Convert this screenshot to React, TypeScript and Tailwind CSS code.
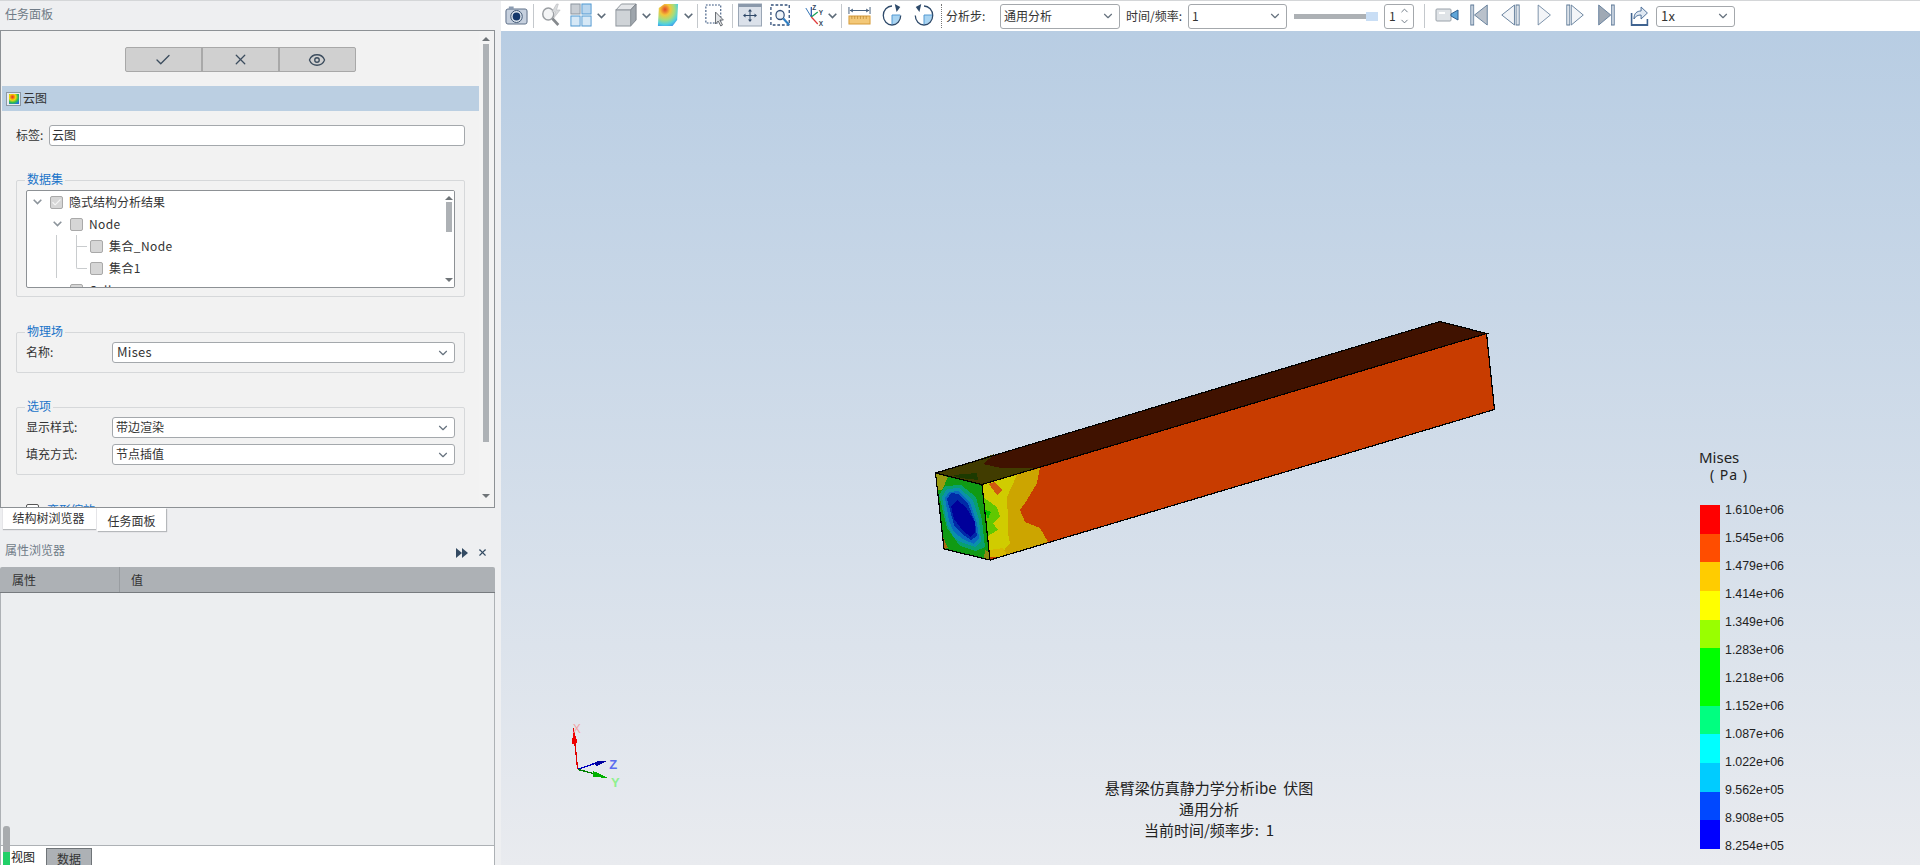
import type { ReactNode } from 'react';
import { Check, ChevronDown, ChevronUp, Eye, X } from 'lucide-react';

const legendBlocks = [
  'h-[29px] bg-[#ff0000]',
  'h-[28px] bg-[#ff4d00]',
  'h-[29px] bg-[#ffcc00]',
  'h-[29px] bg-[#ffff00]',
  'h-[28px] bg-[#99ff00]',
  'h-[58px] bg-[#00ff00]',
  'h-[28px] bg-[#00ff80]',
  'h-[29px] bg-[#00ffff]',
  'h-[29px] bg-[#00ccff]',
  'h-[28px] bg-[#0048ff]',
  'h-[29px] bg-[#0000ff]',
];

const legendLabels = [
  '1.610e+06', '1.545e+06', '1.479e+06', '1.414e+06', '1.349e+06', '1.283e+06', '1.218e+06',
  '1.152e+06', '1.087e+06', '1.022e+06', '9.562e+05', '8.908e+05', '8.254e+05',
];

function Sep({ className }: { className: string }) {
  return <div className={`h-[24px] w-px shrink-0 bg-[#c4c8cc] ${className}`} />;
}

function Chev({ className }: { className: string }) {
  return (
    <svg viewBox="0 0 9 6" className={`h-[6px] w-[9px] shrink-0 text-[#5d6b78] ${className}`} fill="none" stroke="currentColor" strokeWidth="1.6">
      <path d="M.7.8l3.8 3.8L8.3.8" />
    </svg>
  );
}

function Combo({ value, className, latin }: { value: string; className: string; latin?: boolean }) {
  return (
    <div className={`flex shrink-0 items-center justify-between rounded-[3px] border border-[#a4a8ac] bg-white pl-[3px] pr-[4px] text-[#333] ${className}`}>
      <span className={`pb-px ${latin ? 'pl-px text-[13px] tracking-[0.3px]' : ''}`}>{value}</span>
      <ChevronDown className="h-[14px] w-[14px] text-[#66727e]" strokeWidth={2} />
    </div>
  );
}

function Ico({ w, className, children }: { w: string; className?: string; children: ReactNode }) {
  return (
    <svg viewBox="0 0 24 24" className={`mb-[2px] h-[24px] shrink-0 ${w} ${className ?? ''}`} fill="none" preserveAspectRatio="none">
      {children}
    </svg>
  );
}

function Group({ title, className, children }: { title: string; className: string; children: ReactNode }) {
  return (
    <div className={`relative ml-[15px] mr-[14px] rounded-[2px] border border-[#d6d8da] px-[9px] ${className}`}>
      <span className="absolute left-[8px] top-[-11px] bg-[#f2f2f2] px-[2px] text-[12px] leading-[18px] text-[#1a74c9]">{title}</span>
      {children}
    </div>
  );
}

function Cb({ checked }: { checked?: boolean }) {
  return (
    <span className="flex h-[13px] w-[13px] shrink-0 items-center justify-center rounded-[2px] border border-[#a9a9a9] bg-[#d6d6d6]">
      {checked && <Check className="h-[11px] w-[11px] text-[#f4f4f4]" strokeWidth={2.4} />}
    </span>
  );
}

function TreeRow({ pad, chevron, label, checked, latin }: { pad: string; chevron?: boolean; label: string; checked?: boolean; latin?: boolean }) {
  return (
    <div className={`flex h-[22px] items-center ${pad}`}>
      {chevron && <Chev className="mr-[8px] text-[#8c949b]" />}
      <Cb checked={checked} />
      <span className={`ml-[6px] whitespace-nowrap ${latin ? 'tracking-[0.4px]' : ''}`}>{label}</span>
    </div>
  );
}

function Beam() {
  return (
    <svg viewBox="920 310 590 260" className="absolute left-[419px] top-[279px] h-[260px] w-[590px]" shapeRendering="crispEdges">
      {/* top face */}
      <polygon points="935.5,473 982,484.5 1486.5,333.5 1440,321.5" fill="#401200" />
      <polygon points="935.5,473 995,454 983,464 1003,468.5 1040,468 982,484.5" fill="#413c00" />
      <polygon points="953,475 977,473 978,480 960,478" fill="#1c3a00" />
      {/* side face */}
      <polygon points="982,484.5 1486.5,333.5 1494.5,409.5 990,560" fill="#c83c00" />
      <polygon points="982,484 1040,468 1037,483 1027,500 1020,510 1025,522 1040,528 1048,542 990,560" fill="#cca500" />
      <polygon points="982,484 1017,475 1007,497 1008,520 1008,533 1010,543 1000,555 990,560" fill="#d0cc00" />
      <polygon points="983,497 997,507 1000,517 993,523 998,530 986,537" fill="#60c800" />
      <polygon points="985,510 991,512 988,519" fill="#00c000" />
      <polygon points="988,484 995,482 1002,490 997,495 991,487" fill="#d05a10" />
      <polygon points="990,550 1003,548 1007,555 990,560" fill="#d8b800" />
      <polygon points="990,557 997,557 990,560" fill="#c83c00" />
      {/* front face */}
      <polygon points="935.5,473 982,484.5 990,560 944,549" fill="#109a14" />
      <polygon points="935.5,473 948,477 942,490 938,490" fill="#9a9a10" />
      <polygon points="942,535 948,548 944,549" fill="#a86a10" />
      <polygon points="985,550 990,552 990,560 984,558" fill="#8a8a10" />
      <polygon points="939,495 945,486 961,485 976,497 982,520 985,547 976,551 960,546 947,528" fill="#08a070" />
      <polygon points="942,497 947,489 959,488 973,500 979,520 981,541 976,547 963,543 954,538 947,524" fill="#0a90aa" />
      <polygon points="945,498 949,492 958,491 970,502 977,523 979,538 974,544 963,539 954,532 949,521" fill="#0a68c0" />
      <polygon points="947,499 951,493 958,494 968,504 975,522 977,536 971,540 962,534 954,525" fill="#002aa8" />
      <polygon points="951,506 957,500 966,507 975,522 975,532 971,537 963,531 954,519" fill="#00009a" />
      {/* edges */}
      <g stroke="#000" strokeWidth="1.2" fill="none">
        <polygon points="935.5,473 982,484.5 990,560 944,549" />
        <polyline points="935.5,473 1440,321.5 1486.5,333.5 982,484.5" />
        <polyline points="1486.5,333.5 1494.5,409.5 990,560" />
      </g>
    </svg>
  );
}

function Triad() {
  return (
    <svg viewBox="0 0 300 300" className="absolute left-[39px] top-[669px] h-[100px] w-[100px]" fontFamily="'Liberation Sans', sans-serif" fontSize="39" textAnchor="middle" shapeRendering="crispEdges">
      <polyline points="113,208 100,85" stroke="#e00000" strokeWidth="4" fill="none" />
      <polygon points="100,85 96,132 113,130" fill="#f00000" />
      <polyline points="113,208 165,190" stroke="#0000c0" strokeWidth="4" fill="none" />
      <polygon points="163,185 200,183 168,200" fill="#0000a0" />
      <polyline points="113,208 165,222" stroke="#008000" strokeWidth="4" fill="none" />
      <polygon points="160,213 203,233 160,232" fill="#00b000" />
      <text x="110" y="99" fill="#f2a3a3" fontSize="36">X</text>
      <text x="220" y="208" fill="#5a6cf0" fontWeight="700">Z</text>
      <text x="226" y="261" fill="#8ff08f" fontWeight="700">Y</text>
    </svg>
  );
}

export default function App() {
  return (
    <div className="flex h-[865px] w-[1920px] flex-col overflow-hidden bg-[#eeeff1] font-['Noto_Sans_CJK_SC','Noto_Sans',sans-serif] text-[12px] leading-[18px] text-[#333]">
      <div className="h-px shrink-0 bg-[#d4d6d8]" />
      <div className="flex min-h-0 flex-1">
        {/* Left column */}
        <div className="flex w-[501px] shrink-0 flex-col">
          <div className="flex h-[29px] shrink-0 items-center pl-[5px] pb-[3px] text-[#6f7b87]">任务面板</div>

          {/* Task panel */}
          <div className="flex h-[478px] w-[495px] shrink-0 border border-[#8d9195] bg-[#f2f2f2]">
            <div className="min-w-0 flex-1 overflow-hidden pt-[16px]">
              <div className="flex justify-center">
                <div className="flex h-[25px] w-[231px] rounded-[2px] border border-[#a8a8a8] bg-[#d0d0d0] text-[#3c4d5e]">
                  <div className="flex flex-1 items-center justify-center border-r-2 border-[#a8a8a8]"><Check className="h-[18px] w-[18px]" strokeWidth={1.8} /></div>
                  <div className="flex flex-1 items-center justify-center border-r-2 border-[#a8a8a8]"><X className="h-[17px] w-[17px]" strokeWidth={1.8} /></div>
                  <div className="flex flex-1 items-center justify-center"><Eye className="h-[18px] w-[18px]" strokeWidth={1.8} /></div>
                </div>
              </div>

              <div className="ml-px mt-[14px] flex h-[25px] items-center bg-[#bbcfe2] pl-[4px]">
                <div className="mr-[2px] flex h-[14px] w-[15px] items-center justify-center border border-[#8d98a4] bg-[#e8ecf0]">
                  <svg viewBox="0 0 10 10" className="h-[10px] w-[10px]">
                    <defs>
                      <radialGradient id="miniContour" cx="35%" cy="30%" r="80%">
                        <stop offset="0%" stopColor="#e8281c" />
                        <stop offset="40%" stopColor="#f5d80a" />
                        <stop offset="70%" stopColor="#2fc14a" />
                        <stop offset="100%" stopColor="#1f6fe0" />
                      </radialGradient>
                    </defs>
                    <rect width="10" height="10" fill="url(#miniContour)" />
                  </svg>
                </div>
                <span className="pb-px">云图</span>
              </div>

              <div className="ml-[15px] mr-[14px] mt-[14px] flex h-[21px] items-center">
                <span className="w-[33px] shrink-0 pb-px">标签:</span>
                <div className="flex h-[21px] flex-1 items-center rounded-[3px] border border-[#a4a8ac] bg-white pb-px pl-[2px]">云图</div>
              </div>

              <Group title="数据集" className="mt-[34px] h-[117px] pt-[9px]">
                <div className="relative flex h-[98px] overflow-hidden rounded-[2px] border border-[#8d9195] bg-white">
                  <div className="min-w-0 flex-1">
                    <TreeRow pad="pl-[6px]" chevron checked label="隐式结构分析结果" />
                    <TreeRow pad="pl-[26px]" chevron latin label="Node" />
                    <TreeRow pad="pl-[63px]" latin label="集合_Node" />
                    <TreeRow pad="pl-[63px]" latin label="集合1" />
                    <TreeRow pad="pl-[43px]" latin label="Cell" />
                  </div>
                  <div className="flex w-[10px] shrink-0 flex-col items-center bg-white">
                    <div className="mt-[5px] h-0 w-0 border-x-[4px] border-b-[4px] border-x-transparent border-b-[#6f7478]" />
                    <div className="mt-[2px] h-[30px] w-[6px] bg-[#adb1b5]" />
                    <div className="mt-[46px] h-0 w-0 border-x-[4px] border-t-[4px] border-x-transparent border-t-[#6f7478]" />
                  </div>
                  {/* tree guide lines */}
                  <div className="absolute left-[29px] top-[44px] h-[43px] w-px bg-[#c9ccce]" />
                  <div className="absolute left-[49px] top-[44px] h-[12px] w-[11px] border-b border-l border-[#c9ccce]" />
                  <div className="absolute left-[49px] top-[56px] h-[22px] w-[11px] rounded-bl-[2px] border-b border-l border-[#c9ccce]" />
                </div>
              </Group>

              <Group title="物理场" className="mt-[35px] h-[41px] pt-[9px]">
                <div className="flex items-center">
                  <span className="w-[86px] shrink-0 pb-px">名称:</span>
                  <Combo value="Mises" latin className="h-[21px] flex-1" />
                </div>
              </Group>

              <Group title="选项" className="mt-[34px] flex h-[68px] flex-col gap-[6px] pt-[9px]">
                <div className="flex items-center">
                  <span className="w-[86px] shrink-0 pb-px">显示样式:</span>
                  <Combo value="带边渲染" className="h-[21px] flex-1" />
                </div>
                <div className="flex items-center">
                  <span className="w-[86px] shrink-0 pb-px">填充方式:</span>
                  <Combo value="节点插值" className="h-[21px] flex-1" />
                </div>
              </Group>

              <div className="ml-[25px] mt-[26px] flex items-center">
                <span className="h-[13px] w-[13px] rounded-[2px] border border-[#555] bg-white" />
                <span className="ml-[8px] text-[#1a74c9]">变形缩放</span>
              </div>
            </div>

            {/* Panel scrollbar */}
            <div className="flex w-[15px] shrink-0 flex-col items-center bg-[#f3f3f3] pr-[1px]">
              <div className="mt-[6px] h-0 w-0 border-x-[4px] border-b-[4px] border-x-transparent border-b-[#6f7478]" />
              <div className="mt-[3px] h-[398px] w-[6px] bg-[#adb1b5]" />
              <div className="mt-[52px] h-0 w-0 border-x-[4px] border-t-[4px] border-x-transparent border-t-[#6f7478]" />
            </div>
          </div>

          {/* Tabs */}
          <div className="flex h-[25px] shrink-0 items-start pl-[3px]">
            <div className="flex h-[21px] w-[93px] items-center justify-center bg-white pb-px pr-[2px] shadow-[0_1px_1px_#b5b8bb]">结构树浏览器</div>
            <div className="ml-px flex h-[23px] w-[69px] items-center justify-center bg-white pt-[2px] shadow-[1px_1px_1px_#b5b8bb]">任务面板</div>
          </div>

          {/* Properties */}
          <div className="flex h-[34px] w-[495px] shrink-0 items-center justify-between pb-[1px] pl-[5px] pr-[7px] text-[#6f7b87]">
            <span>属性浏览器</span>
            <div className="mt-[6px] flex items-center gap-[9px] text-[#334a62]">
              <svg viewBox="0 0 12 10" className="h-[10px] w-[12px]" fill="currentColor">
                <polygon points="0,0 6,5 0,10" />
                <polygon points="6,0 12,5 6,10" />
              </svg>
              <X className="h-[11px] w-[11px]" strokeWidth={2.4} />
            </div>
          </div>
          <div className="flex h-[26px] w-[495px] shrink-0 items-center rounded-t-[2px] border-b border-[#777b7f] bg-[#adb1b5]">
            <div className="flex h-full w-[120px] items-center border-r border-[#999da1] pl-[12px]">属性</div>
            <div className="pl-[11px]">值</div>
          </div>
          <div className="relative min-h-0 w-[495px] flex-1 border-x border-b border-[#adb1b5] bg-[#eceef0]" />
          <div className="relative flex h-[19px] w-[495px] shrink-0 items-end border-x border-[#adb1b5] bg-white pl-[10px]">
            <span className="mb-[-1px] w-[35px] text-[#222]">视图</span>
            <div className="flex h-[17px] w-[46px] items-start justify-center overflow-hidden border border-b-0 border-[#6f7478] bg-[#adb1b5] leading-[20px]">数据</div>
            {/* window scroll handle over the tab strip */}
            <div className="absolute left-[2px] top-[-20px] h-[27px] w-[7px] rounded-t-[3px] bg-[#a8abae]" />
            <div className="absolute bottom-0 left-[2px] h-[13px] w-[7px] bg-[#22d068]" />
          </div>
        </div>

        {/* Right column */}
        <div className="flex min-w-0 flex-1 flex-col">
          {/* Toolbar */}
          <div className="flex h-[30px] shrink-0 items-center bg-white pl-[4px] text-[12px] text-[#333]">
            <Ico w="w-[23px]">
              <rect x="1" y="6" width="22" height="15" rx="2" fill="#c6d0de" stroke="#5a6d85" />
              <rect x="4" y="3.5" width="5" height="3" fill="#8b9bb0" />
              <circle cx="12" cy="13.5" r="6" fill="#dfe6ee" stroke="#3d5573" />
              <circle cx="12" cy="13.5" r="4" fill="#15386b" />
            </Ico>
            <Sep className="ml-[5px]" />
            <Ico w="w-[22px]" className="ml-[6px]">
              <circle cx="9" cy="11" r="6" fill="#f4f5f6" stroke="#9b9fa3" strokeWidth="1.6" />
              <path d="M13.5 15.5L20 22" stroke="#85898d" strokeWidth="3" />
              <path d="M18 1l-5 8h4l-2 6 7-8h-4l2-6z" fill="#d8dadc" stroke="#b8babc" strokeWidth=".6" />
            </Ico>
            <Ico w="w-[22px]" className="ml-[8px]">
              <rect x="1" y="1" width="10" height="10" fill="#c9ced4" stroke="#8a949e" />
              <rect x="13" y="1" width="10" height="10" fill="#b9d6ee" stroke="#4f97d0" />
              <rect x="1" y="13" width="10" height="10" fill="#d6e8f6" stroke="#4f97d0" />
              <rect x="13" y="13" width="10" height="10" fill="#d6e8f6" stroke="#4f97d0" />
            </Ico>
            <Chev className="ml-[5px]" />
            <Ico w="w-[22px]" className="ml-[9px]">
              <polygon points="1,7 7,1 23,1 17,7" fill="#e4e6e9" stroke="#8d949b" />
              <polygon points="17,7 23,1 23,17 17,23" fill="#9ea5ac" stroke="#7c838a" />
              <rect x="1" y="7" width="16" height="16" fill="#cfd3d7" stroke="#8d949b" />
            </Ico>
            <Chev className="ml-[5px]" />
            <Ico w="w-[22px]" className="ml-[6px]">
              <defs>
                <radialGradient id="toolContour" cx="35%" cy="25%" r="85%">
                  <stop offset="0%" stopColor="#e2462a" />
                  <stop offset="30%" stopColor="#f3c63a" />
                  <stop offset="55%" stopColor="#a8dc7a" />
                  <stop offset="80%" stopColor="#4fd0e0" />
                  <stop offset="100%" stopColor="#3f8fe8" />
                </radialGradient>
              </defs>
              <polygon points="2,5 8,1 23,1 22,17 17,23 1,23" fill="url(#toolContour)" />
            </Ico>
            <Chev className="ml-[5px]" />
            <Sep className="ml-[4px]" />
            <Ico w="w-[21px]" className="ml-[7px]">
              <rect x="1" y="2" width="17" height="18" stroke="#33507a" strokeWidth="1.2" strokeDasharray="2 1.5" />
              <path d="M12 9v12l3-3 3 5 2-1-3-5h4z" fill="#e2e4e6" stroke="#63686d" />
            </Ico>
            <Sep className="ml-[6px]" />
            <Ico w="w-[24px]" className="ml-[5px]">
              <rect x="0.5" y="1" width="23" height="22" fill="#dbe1ea" stroke="#9aa6b5" />
              <rect x="0.5" y="1" width="23" height="3" fill="#8b99ab" />
              <path d="M12 7v11M6.5 12.5h11" stroke="#2f4868" />
              <path d="M12 6l-2 2.5h4zM12 19l-2-2.5h4zM5 12.5l2.5-2v4zM19 12.5l-2.5-2v4z" fill="#2f4868" />
            </Ico>
            <Ico w="w-[22px]" className="ml-[8px]">
              <rect x="1" y="2" width="20" height="20" stroke="#33507a" strokeWidth="1.4" strokeDasharray="3 2" />
              <circle cx="11" cy="12" r="4.5" fill="#eef3f8" stroke="#33507a" strokeWidth="1.3" />
              <path d="M14.5 15.5L21 22" stroke="#2e7fc4" strokeWidth="2.4" />
            </Ico>
            <Ico w="w-[22px]" className="ml-[12px]">
              <path d="M8 14V4" stroke="#2f5fb0" strokeWidth="1.4" />
              <path d="M8 14L2 5" stroke="#2c6fb4" strokeWidth="1" />
              <path d="M8 14l7-5" stroke="#18a058" strokeWidth="1.4" />
              <path d="M8 14l7 7" stroke="#e23a3a" strokeWidth="1.4" />
              <text x="9" y="7" fontSize="7" fontWeight="700" fill="#33475b" fontFamily="'Liberation Sans', sans-serif">Z</text>
              <text x="16" y="12" fontSize="7" fontWeight="700" fill="#33475b" fontFamily="'Liberation Sans', sans-serif">Y</text>
              <text x="16" y="23" fontSize="7" fontWeight="700" fill="#33475b" fontFamily="'Liberation Sans', sans-serif">X</text>
            </Ico>
            <Chev className="ml-[2px]" />
            <Sep className="ml-[4px]" />
            <Ico w="w-[23px]" className="ml-[6px]">
              <path d="M1 4v7M23 4v7" stroke="#46607e" />
              <path d="M2 7.5h20" stroke="#46607e" />
              <path d="M2 7.5l3-2v4zM22 7.5l-3-2v4z" fill="#46607e" />
              <rect x="1" y="13" width="22" height="8" fill="#f3c878" stroke="#d59a38" />
              <path d="M4 13v3M7 13v3M10 13v3M13 13v3M16 13v3M19 13v3" stroke="#b8862f" strokeWidth=".7" />
            </Ico>
            <Ico w="w-[22px]" className="ml-[10px]">
              <path d="M12 12h9A9.5 9.5 0 0 1 12 21.5z" fill="#a8d4f2" />
              <path d="M12 3a9.5 9.5 0 1 0 9.5 9.5" stroke="#2e4a6a" strokeWidth="1.4" />
              <path d="M12 12v9.5M12 12h9" stroke="#4f97d0" strokeWidth="1" />
              <path d="M15 1l6 3-4 5z" fill="#2e4a6a" />
            </Ico>
            <Ico w="w-[22px]" className="ml-[10px]">
              <path d="M12 12v9.5A9.5 9.5 0 0 0 21 12z" fill="#a8d4f2" />
              <path d="M12 3a9.5 9.5 0 1 1-9.5 9.5" stroke="#2e4a6a" strokeWidth="1.4" />
              <path d="M12 12v9.5M12 12h9" stroke="#4f97d0" strokeWidth="1" />
              <path d="M9 1L3 4l4 5z" fill="#2e4a6a" />
            </Ico>
            <div className="ml-[6px] h-[24px] w-px shrink-0 border-l border-dotted border-[#777]" />
            <span className="ml-[4px] w-[54px] shrink-0">分析步:</span>
            <Combo value="通用分析" className="h-[25px] w-[120px]" />
            <span className="ml-[6px] w-[56px] shrink-0 whitespace-nowrap">时间/频率:</span>
            <Combo value="1" className="ml-[6px] h-[25px] w-[99px]" />
            <div className="ml-[7px] flex h-[9px] w-[84px] shrink-0 items-center">
              <div className="h-[5px] flex-1 bg-[#adb1b5]" />
              <div className="h-[9px] w-[12px] bg-[#c9def5]" />
            </div>
            <div className="ml-[6px] flex h-[25px] w-[30px] shrink-0 items-center justify-between rounded-[3px] border border-[#a4a8ac] pl-[4px] pr-[2px]">
              <span>1</span>
              <div className="flex flex-col text-[#66727e]">
                <ChevronUp className="h-[11px] w-[13px]" strokeWidth={2} />
                <ChevronDown className="h-[11px] w-[13px]" strokeWidth={2} />
              </div>
            </div>
            <Sep className="ml-[10px]" />
            <Ico w="w-[24px]" className="ml-[10px]">
              <rect x="1" y="6" width="15" height="12" rx="1" fill="#dfe3e7" stroke="#9aa2aa" />
              <path d="M4 10h6" stroke="#fff" strokeWidth="2" />
              <path d="M16 11l7-4v10l-7-4z" fill="#5fa5d8" stroke="#2e5f8e" />
            </Ico>
            <Ico w="w-[18px]" className="ml-[11px]">
              <rect x="1" y="2" width="4" height="20" fill="#c4cfdc" stroke="#5c7896" />
              <path d="M23 2v20L6 12z" fill="#b9c1cb" stroke="#5c7896" />
            </Ico>
            <Ico w="w-[19px]" className="ml-[13px]">
              <path d="M17 2v20L1 12z" fill="#f3f5f8" stroke="#5c7896" />
              <rect x="19" y="2" width="4" height="20" fill="#dde3ea" stroke="#5c7896" />
            </Ico>
            <Ico w="w-[14px]" className="ml-[17px]">
              <path d="M2 2v20l21-10z" fill="#f3f5f8" stroke="#5c7896" />
            </Ico>
            <Ico w="w-[18px]" className="ml-[15px]">
              <rect x="1" y="2" width="4" height="20" fill="#dde3ea" stroke="#5c7896" />
              <path d="M7 2v20l16-10z" fill="#f3f5f8" stroke="#5c7896" />
            </Ico>
            <Ico w="w-[17px]" className="ml-[14px]">
              <path d="M1 2v20l17-10z" fill="#9fa9b5" stroke="#5c7896" />
              <rect x="19" y="2" width="4" height="20" fill="#c4cfdc" stroke="#5c7896" />
            </Ico>
            <Ico w="w-[19px]" className="ml-[15px]">
              <path d="M2 10v12h20v-6" stroke="#3f6390" strokeWidth="2" />
              <path d="M5 16c0-6 4-8 9-8V4l8 6-8 6v-4c-4 0-7 1-9 4z" fill="#dfe8f2" stroke="#3f6390" />
            </Ico>
            <Combo value="1x" latin className="ml-[7px] h-[21px] w-[79px]" />
          </div>

          {/* Viewport */}
          <div className="relative min-h-0 flex-1 overflow-hidden bg-linear-to-b from-[#b8cde3] to-[#e9ebef]">
            <Beam />
            <Triad />

            {/* Legend */}
            <div className="absolute left-[1198px] top-[417px] font-['Noto_Sans','Noto_Sans_CJK_SC',sans-serif] text-[#222]">
              <div className="text-[15px] leading-[18px]">Mises</div>
              <div className="pl-[11px] text-[14px] leading-[18px] tracking-[1px]">( Pa )</div>
              <div className="mt-[12px] flex">
                <div className="ml-px mt-[9px] flex w-[20px] flex-col">
                  {legendBlocks.map((block) => (
                    <div key={block} className={block} />
                  ))}
                </div>
                <div className="ml-[5px] flex flex-col font-['Liberation_Sans',sans-serif] text-[12.4px]">
                  {legendLabels.map((label) => (
                    <div key={label} className="flex h-[28px] items-center whitespace-nowrap">{label}</div>
                  ))}
                </div>
              </div>
            </div>

            {/* Caption */}
            <div className="absolute left-[508px] top-[746px] w-[400px] whitespace-pre text-center text-[15px] leading-[21px] text-[#222]">
              <div>悬臂梁仿真静力学分析ibe  伏图</div>
              <div>通用分析</div>
              <div>当前时间/频率步:  1</div>
            </div>
          </div>
        </div>
      </div>
    </div>
  );
}
